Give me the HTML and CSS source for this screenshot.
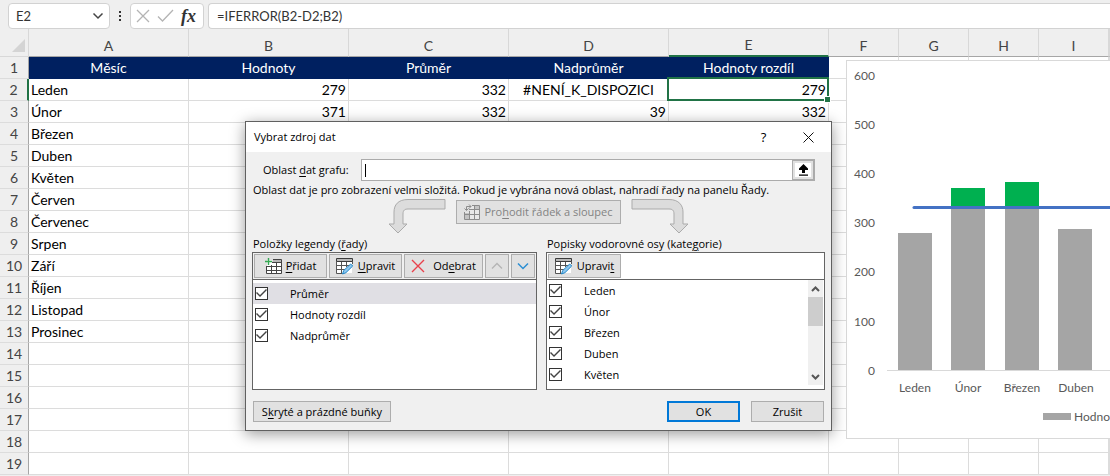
FILE: index.html
```html
<!DOCTYPE html>
<html lang="cs">
<head>
<meta charset="utf-8">
<title>Vybrat zdroj dat</title>
<link rel="stylesheet" href="styles.css">
</head>
<body>
<svg class="defs" aria-hidden="true">
  <symbol id="edit-table" viewBox="0 0 18 17">
    <path d="M1 4h15v11H1z" fill="#fff"/>
    <path d="M.5 .5h16v3H.5z" fill="#b8b8b8" stroke="#3b3b3b"/>
    <path d="M.5 3v12.500h6M5.500 4v11M10.500 4v5M1 7.500h14M1 11.500h8M16.500 3v3" fill="none" stroke="#555"/>
    <path d="M6.500 16l1.200-3.500 7-6.500 2 2-6.800 6.700z" fill="#8fc7ee" stroke="#1f86c8"/>
  </symbol>
</svg>

<header class="formula-bar">
  <button class="name-box" type="button"><span>E2</span>
    <svg width="12" height="8" viewBox="0 0 12 8"><path d="M1.500 1.500L6 6l4.500-4.500" fill="none" stroke="#444" stroke-width="1.500"/></svg>
  </button>
  <svg class="dots" width="4" height="12" viewBox="0 0 4 12"><path d="M1 1h2v2H1zM1 5h2v2H1zM1 9h2v2H1z" fill="#333"/></svg>
  <div class="formula-tools">
    <button type="button" aria-label="Zrušit zadání"><svg width="14" height="14" viewBox="0 0 14 14"><path d="M1 1l12 12M13 1L1 13" stroke="#b4b4b4" stroke-width="1.300"/></svg></button>
    <button type="button" aria-label="Zadat"><svg width="17" height="14" viewBox="0 0 17 14"><path d="M1 7.500l4.500 4.500L16 1" fill="none" stroke="#b4b4b4" stroke-width="1.300"/></svg></button>
    <button type="button" class="fx" aria-label="Vložit funkci"><i>fx</i></button>
  </div>
  <input class="formula" type="text" aria-label="Řádek vzorců" value="=IFERROR(B2-D2;B2)">
</header>

<main class="sheet">
  <table class="grid">
    <colgroup><col class="c-row"><col class="c-wide"><col class="c-wide"><col class="c-wide"><col class="c-wide"><col class="c-wide"><col class="c-std"><col class="c-std"><col class="c-std"><col class="c-std"><col></colgroup>
    <thead><tr><th class="corner"><svg width="13" height="13" viewBox="0 0 13 13"><path d="M13 0v13H0z" fill="#d4d4d4"/></svg></th><th>A</th><th>B</th><th>C</th><th>D</th><th class="active">E</th><th>F</th><th>G</th><th>H</th><th>I</th><th></th></tr></thead>
    <tbody>
      <tr class="titles"><th>1</th><td>Měsíc</td><td>Hodnoty</td><td>Průměr</td><td>Nadprůměr</td><td>Hodnoty rozdíl</td><td></td><td></td><td></td><td></td><td></td></tr>
      <tr><th class="active">2</th><td>Leden</td><td class="num">279</td><td class="num">332</td><td class="err">#NENÍ_K_DISPOZICI</td><td class="num selected">279</td><td></td><td></td><td></td><td></td><td></td></tr>
      <tr><th>3</th><td>Únor</td><td class="num">371</td><td class="num">332</td><td class="num">39</td><td class="num">332</td><td></td><td></td><td></td><td></td><td></td></tr>
      <tr><th>4</th><td>Březen</td><td></td><td></td><td></td><td></td><td></td><td></td><td></td><td></td><td></td></tr>
      <tr><th>5</th><td>Duben</td><td></td><td></td><td></td><td></td><td></td><td></td><td></td><td></td><td></td></tr>
      <tr><th>6</th><td>Květen</td><td></td><td></td><td></td><td></td><td></td><td></td><td></td><td></td><td></td></tr>
      <tr><th>7</th><td>Červen</td><td></td><td></td><td></td><td></td><td></td><td></td><td></td><td></td><td></td></tr>
      <tr><th>8</th><td>Červenec</td><td></td><td></td><td></td><td></td><td></td><td></td><td></td><td></td><td></td></tr>
      <tr><th>9</th><td>Srpen</td><td></td><td></td><td></td><td></td><td></td><td></td><td></td><td></td><td></td></tr>
      <tr><th>10</th><td>Září</td><td></td><td></td><td></td><td></td><td></td><td></td><td></td><td></td><td></td></tr>
      <tr><th>11</th><td>Říjen</td><td></td><td></td><td></td><td></td><td></td><td></td><td></td><td></td><td></td></tr>
      <tr><th>12</th><td>Listopad</td><td></td><td></td><td></td><td></td><td></td><td></td><td></td><td></td><td></td></tr>
      <tr><th>13</th><td>Prosinec</td><td></td><td></td><td></td><td></td><td></td><td></td><td></td><td></td><td></td></tr>
      <tr><th>14</th><td></td><td></td><td></td><td></td><td></td><td></td><td></td><td></td><td></td><td></td></tr>
      <tr><th>15</th><td></td><td></td><td></td><td></td><td></td><td></td><td></td><td></td><td></td><td></td></tr>
      <tr><th>16</th><td></td><td></td><td></td><td></td><td></td><td></td><td></td><td></td><td></td><td></td></tr>
      <tr><th>17</th><td></td><td></td><td></td><td></td><td></td><td></td><td></td><td></td><td></td><td></td></tr>
      <tr><th>18</th><td></td><td></td><td></td><td></td><td></td><td></td><td></td><td></td><td></td><td></td></tr>
      <tr><th>19</th><td></td><td></td><td></td><td></td><td></td><td></td><td></td><td></td><td></td><td></td></tr>
    </tbody>
  </table>

  <figure class="chart">
    <svg width="700" height="377" viewBox="0 0 700 377" role="img" aria-label="Graf hodnot">
      <g class="axis" text-anchor="end">
        <text x="28" y="19">600</text><text x="28" y="68">500</text><text x="28" y="117">400</text><text x="28" y="166">300</text><text x="28" y="215">200</text><text x="28" y="265">100</text><text x="28" y="314">0</text>
      </g>
      <path d="M40 309.500H700" stroke="#d9d9d9"/>
      <g fill="#a5a5a5"><path d="M51 172h34v137H51zM104 146h34v163h-34zM158 146h34v163h-34zM211 168h34v141h-34z"/></g>
      <g fill="#00b050"><path d="M104 127h34v19h-34zM158 121h34v25h-34z"/></g>
      <path d="M67 146.500H700" stroke="#4472c4" stroke-width="3" stroke-linecap="round"/>
      <g class="axis" text-anchor="middle">
        <text x="68" y="331">Leden</text><text x="121" y="331">Únor</text><text x="175" y="331">Březen</text><text x="229" y="331">Duben</text>
      </g>
      <path d="M196 352h28v7h-28z" fill="#a5a5a5"/>
      <text class="axis" x="227" y="360">Hodnoty rozdíl</text>
    </svg>
  </figure>
</main>

<section class="dialog" role="dialog" aria-labelledby="dlg-title">
  <div class="title-bar">
    <h1 id="dlg-title">Vybrat zdroj dat</h1>
    <button type="button" aria-label="Nápověda">?</button>
    <button type="button" aria-label="Zavřít"><svg width="11" height="11" viewBox="0 0 11 11"><path d="M.5 .5l10 10M10.500 .5l-10 10" stroke="#111"/></svg></button>
  </div>
  <form class="body">
    <div class="range-row">
      <label for="range">Oblast <u>d</u>at grafu:</label>
      <div class="range-box">
        <input id="range" type="text">
        <button type="button" aria-label="Sbalit dialog"><svg width="11" height="12" viewBox="0 0 11 12"><path d="M5.500 0l4.500 4.500v1.500H7V9H4V6H1V4.500zM1 10.500h9v1.200H1z" fill="#000"/></svg></button>
      </div>
    </div>
    <p class="note">Oblast dat je pro zobrazení velmi složitá. Pokud je vybrána nová oblast, nahradí řady na panelu Řady.</p>
    <div class="switch-row">
      <svg width="58" height="35" viewBox="0 0 58 35"><path d="M57 .5H20C10 .5 6 6 6 13v12H1l9 9 9-9h-4V15c0-4 2-5 5-5h37z" fill="#dcdcdc" stroke="#ababab"/></svg>
      <button type="button" class="btn switch" disabled>
        <svg width="16" height="16" viewBox="0 0 16 16"><path d="M6 2h9v13H1V8h5z" fill="#e8e8e8"/><path d="M10 1h5v5h-5zM1 9h4v6H1z" fill="#c4c4c4"/><path d="M8 1.500h7.500v14H.5V8M5.500 7v8M10.500 2v13M5 5.500h10M1 10.500h14M2.500 6V2.500H7M5 .5l2 2-2 2M.5 4.500l2 2 2-2" fill="none" stroke="#8c8c8c"/></svg>
        <span>Pro<u>h</u>odit řádek a sloupec</span>
      </button>
      <svg width="58" height="35" viewBox="0 0 58 35"><path d="M1 .5h37c10 0 14 6 14 12.500v12h5l-9 9-9-9h4V15c0-4-2-5-5-5H1z" fill="#dcdcdc" stroke="#ababab"/></svg>
    </div>
    <div class="panels">
      <section class="series">
        <h2>Položky legendy (<u>ř</u>ady)</h2>
        <div class="panel">
          <div class="tools">
            <button type="button" class="btn add"><svg width="17" height="17" viewBox="0 0 17 17"><path d="M2 2h14v14H2z" fill="#fff"/><path d="M8 1.500h8v3H7z" fill="#b8b8b8"/><path d="M8 1.500h8.500v14H1.500V8M7 4.500h9M2 8.500h14M2 12.500h14M6.500 7v9M11.500 4v12" fill="none" stroke="#444"/><path d="M3.500 0v7M0 3.500h7" stroke="#35a853" stroke-width="1.400"/></svg><span><u>P</u>řidat</span></button>
            <button type="button" class="btn edit"><svg width="18" height="17"><use href="#edit-table"/></svg><span><u>U</u>pravit</span></button>
            <button type="button" class="btn remove"><svg width="14" height="14" viewBox="0 0 14 14"><path d="M1 1l12 12M13 1L1 13" stroke="#e8414b" stroke-width="1.400"/></svg><span>Od<u>e</u>brat</span></button>
            <button type="button" class="btn move" disabled aria-label="Nahoru"><svg width="12" height="8" viewBox="0 0 12 8"><path d="M1 6.500l5-5 5 5" fill="none" stroke="#b4b4b4" stroke-width="1.400"/></svg></button>
            <button type="button" class="btn move" aria-label="Dolů"><svg width="12" height="8" viewBox="0 0 12 8"><path d="M1 1.500l5 5 5-5" fill="none" stroke="#2b8fd3" stroke-width="1.500"/></svg></button>
          </div>
          <div class="list">
            <label class="current"><input type="checkbox" checked>Průměr</label>
            <label><input type="checkbox" checked>Hodnoty rozdíl</label>
            <label><input type="checkbox" checked>Nadprůměr</label>
          </div>
        </div>
      </section>
      <section class="categories">
        <h2>Popisky vodorovné osy (kate<u>g</u>orie)</h2>
        <div class="panel">
          <div class="tools">
            <button type="button" class="btn edit"><svg width="18" height="17"><use href="#edit-table"/></svg><span>Upravi<u>t</u></span></button>
          </div>
          <div class="scroll-area">
            <div class="list">
              <label><input type="checkbox" checked>Leden</label>
              <label><input type="checkbox" checked>Únor</label>
              <label><input type="checkbox" checked>Březen</label>
              <label><input type="checkbox" checked>Duben</label>
              <label><input type="checkbox" checked>Květen</label>
            </div>
            <div class="scrollbar">
              <svg width="9" height="6" viewBox="0 0 9 6"><path d="M1 5l3.500-3.500L8 5" fill="none" stroke="#555" stroke-width="2"/></svg>
              <span class="thumb"></span>
              <svg width="9" height="6" viewBox="0 0 9 6"><path d="M1 1l3.500 3.500L8 1" fill="none" stroke="#555" stroke-width="2"/></svg>
            </div>
          </div>
        </div>
      </section>
    </div>
    <div class="actions">
      <button type="button" class="btn hidden-cells"><span>S<u>k</u>ryté a prázdné buňky</span></button>
      <button type="button" class="btn ok">OK</button>
      <button type="button" class="btn cancel">Zrušit</button>
    </div>
  </form>
</section>
</body>
</html>
```
FILE: styles.css
```css
* { box-sizing: border-box; }
body {
  margin: 0;
  height: 100vh;
  overflow: hidden;
  display: flex;
  flex-direction: column;
  background: #efefef;
  color: #000;
  font: 14px/20px Lato, sans-serif;
}
button, input { font: inherit; color: inherit; margin: 0; }
button { display: flex; align-items: center; justify-content: center; padding: 0; border: 0; background: none; white-space: nowrap; }
svg { flex: none; display: block; }
.defs { position: absolute; width: 0; height: 0; }
u { text-underline-offset: 2px; }

/* Formula bar */
.formula-bar { display: flex; align-items: center; flex: none; padding: 3px 0 0 8px; height: 29px; }
.name-box, .formula-tools, .formula { height: 26px; border: 1px solid #d2d2d2; border-radius: 4px; background: #fff; color: #333; font-size: 13px; }
.name-box { width: 102px; padding: 0 5px 0 7px; justify-content: space-between; }
.dots { margin: 0 8px; }
.formula-tools { display: flex; align-items: center; gap: 7px; width: 74px; padding: 0 5px; }
.fx { font: 700 18px/20px "Liberation Serif", serif; }
.formula { flex: 1; min-width: 0; margin-left: 4px; padding: 0 8px; border-right: 0; border-radius: 4px 0 0 4px; }

/* Worksheet */
.sheet { flex: 1; min-height: 0; position: relative; overflow: hidden; }
.grid { width: 100%; table-layout: fixed; border-collapse: separate; border-spacing: 0; background: #fff; }
.c-row { width: 29px; }
.c-wide { width: 160px; }
.c-std { width: 70px; }
.grid th { padding: 0; background: #efefef; color: #444; font-weight: 400; text-align: center; }
.grid thead th { height: 28px; padding-top: 6px; border-bottom: 1px solid #a6a6a6; border-right: 1px solid #d8d8d8; }
.grid thead th.active { border-bottom: 2px solid #217346; }
.grid thead .corner { border-color: #d8d8d8; }
.corner svg { margin-left: 12px; }
.grid tbody th { border-right: 1px solid #a6a6a6; border-bottom: 1px solid #dcdcdc; }
.grid tbody th.active { border-right: 2px solid #217346; }
.grid td { height: 22px; padding: 0 2px; line-height: 21px; white-space: nowrap; border-right: 1px solid #dcdcdc; border-bottom: 1px solid #dcdcdc; }
.grid .num { text-align: right; }
.grid .err { text-align: center; }
.titles td { text-align: center; }
.titles td:nth-child(-n+6) { background: #002060; border-color: #002060; color: #fff; }
.grid .selected { position: relative; }
.selected::before { content: ""; position: absolute; inset: -2px -1px -1px -2px; border: 2px solid #217346; }
.selected::after { content: ""; position: absolute; right: -2px; bottom: -2px; width: 5px; height: 5px; background: #217346; box-shadow: 0 0 0 1px #fff; }

/* Chart floats over the cells */
.chart { position: absolute; left: 846px; right: 0; top: 31px; margin: 0; overflow: hidden; background: #fff; border: 1px solid #d9d9d9; border-right: 0; }
.axis { font-size: 12px; fill: #595959; }

/* Dialog floats over the worksheet */
.dialog { position: absolute; left: 245px; top: 121px; width: 587px; background: #f0f0f0; border: 1px solid #606060; box-shadow: 0 3px 14px rgba(0, 0, 0, .4); font: 11px/16px "Open Sans", sans-serif; }
.title-bar { display: flex; align-items: center; height: 30px; padding-left: 8px; background: #fff; }
.title-bar h1 { flex: 1; margin: 0; font: inherit; }
.title-bar button { width: 45px; height: 30px; font-size: 13px; }
.body { margin: 0; padding: 7px 6px 8px; }
.range-row { display: flex; align-items: center; justify-content: space-between; gap: 10px; padding: 0 10px 0 11px; }
.range-box { position: relative; display: flex; width: 454px; height: 22px; border: 1px solid #ababab; background: #fff; }
.range-box input { flex: 1; min-width: 0; border: 0; padding: 0 4px; background: none; outline: 0; }
.range-box::before { content: ""; position: absolute; left: 3px; top: 4px; width: 1px; height: 13px; background: #000; }
.range-box button { width: 22px; border: 1px solid #ababab; box-shadow: inset 0 0 0 2px #e1e1e1; }
.note { margin: 0; padding-left: 1px; line-height: 18px; white-space: nowrap; }
.switch-row { display: flex; align-items: flex-start; justify-content: center; gap: 10px; height: 37px; }
.btn { height: 24px; gap: 4px; background: #e1e1e1; border: 1px solid #adadad; }
.switch { width: 165px; margin-top: 1px; color: #838383; }
.panels { display: flex; gap: 9px; }
.panels h2 { margin: 0; padding-left: 1px; font: inherit; }
.series { width: 285px; }
.categories { flex: 1; }
.panel { height: 138px; border: 1px solid #646464; background: #fff; }
.tools { display: flex; gap: 2px; height: 27px; padding: 1px; border-bottom: 1px solid #646464; }
.series .tools { background: #f0f0f0; }
.add, .edit { width: 73px; }
.remove { width: 79px; gap: 8px; }
.move { width: 24px; }
.list { flex: 1; padding-top: 3px; }
.list label { display: flex; align-items: center; gap: 22px; height: 21px; padding-left: 2px; }
.list .current { background: #e0dfe4; }
.list input { appearance: none; width: 13px; height: 13px; border: 1px solid #333; background: #fff; }
.list input:checked::before { content: ""; display: block; width: 11px; height: 11px; background: #444; clip-path: polygon(0 5px, 1px 4px, 4px 7px, 10px 1px, 11px 2px, 4px 9px); }
.scroll-area { display: flex; padding-right: 1px; }
.scroll-area .list { padding-top: 0; }
.scrollbar { display: flex; flex-direction: column; align-items: center; width: 15px; height: 105px; padding: 6px 0 5px; background: #f0f0f0; }
.thumb { width: 15px; height: 29px; margin: 5px 0 auto; background: #cdcdcd; }
.actions { display: flex; gap: 11px; padding: 11px 1px 0; }
.actions .btn { width: 73px; height: 21px; }
.actions .hidden-cells { width: 138px; margin-right: auto; }
.actions .ok { border: 2px solid #0078d7; }
```
